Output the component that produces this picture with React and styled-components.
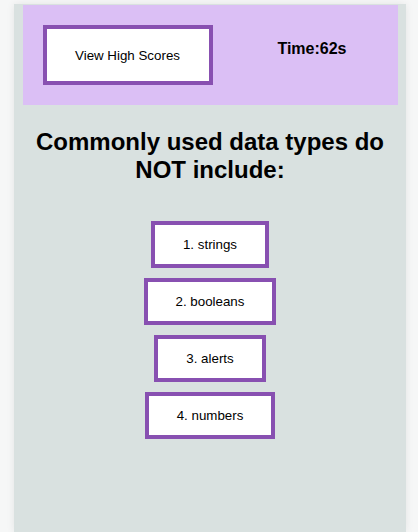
import React from "react";
import styled, { createGlobalStyle } from "styled-components";

const GlobalStyle = createGlobalStyle`
    html, body {
        margin: 0;
        padding: 0;
        background-color: #f6f7f7;
        font-family: "Liberation Sans", Arial, sans-serif;
    }
`;

const Page = styled.div`
    width: 392px;
    min-height: calc(100vh - 4px);
    margin: 4px 12px 0 14px;
    padding-top: 1px;
    box-sizing: border-box;
    background-color: #d9e1e0;
    box-shadow: 0 0 8px rgba(0, 0, 0, 0.08);
`;

const Header = styled.header`
    width: 375px;
    height: 100px;
    margin: 0 auto;
    padding: 20px 51px 20px 20px;
    box-sizing: border-box;
    background-color: #dbbff5;
    display: flex;
    justify-content: space-between;
    align-items: flex-start;
`;

const ScoresButton = styled.button`
    width: 170px;
    height: 60px;
    padding: 0;
    background-color: #ffffff;
    border: 4px solid #8850b1;
    font-family: "Liberation Sans", Arial, sans-serif;
    font-size: 13.33px;
    color: #000;
    cursor: pointer;
`;

const Timer = styled.div`
    margin-top: 15px;
    font-size: 16px;
    font-weight: bold;
    color: #000;
`;

const Question = styled.h2`
    margin: 23px 20px 37px;
    font-size: 24px;
    font-weight: bold;
    text-align: center;
    color: #000;
`;

const Answers = styled.div`
    display: flex;
    flex-direction: column;
    align-items: center;
    gap: 10px;
`;

const AnswerButton = styled.button`
    padding: 12px 28px;
    background-color: #ffffff;
    border: 4px solid #8850b1;
    font-family: "Liberation Sans", Arial, sans-serif;
    font-size: 13.33px;
    line-height: 15px;
    color: #000;
    cursor: pointer;
`;

const answers = ["1. strings", "2. booleans", "3. alerts", "4. numbers"];

export default function App() {
    return (
        <>
            <GlobalStyle />
            <Page>
                <Header>
                    <ScoresButton>View High Scores</ScoresButton>
                    <Timer>Time:62s</Timer>
                </Header>
                <Question>Commonly used data types do NOT include:</Question>
                <Answers>
                    {answers.map((a) => (
                        <AnswerButton key={a}>{a}</AnswerButton>
                    ))}
                </Answers>
            </Page>
        </>
    );
}
